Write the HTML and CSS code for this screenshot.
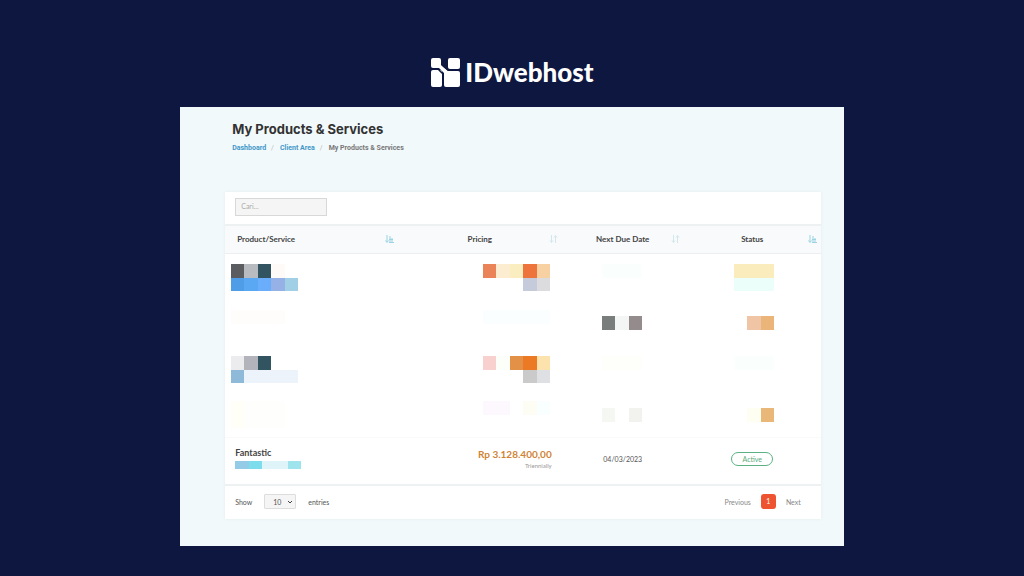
FILE: index.html
```html
<!DOCTYPE html>
<html lang="en">
<head>
<meta charset="utf-8">
<title>My Products &amp; Services</title>
<link rel="stylesheet" href="styles.css">
</head>
<body>
<header class="brand">
  <svg class="brand-mark" viewBox="0 0 30 29" aria-hidden="true">
    <g fill="#fff">
      <rect x="1" y="0" width="10" height="10" rx="2"/>
      <rect x="18" y="0" width="12" height="11" rx="2"/>
      <rect x="1" y="12" width="11" height="17" rx="2"/>
      <rect x="14" y="13" width="16" height="16" rx="2"/>
      <path d="M8 9l3-2 7 6-3 3z"/>
    </g>
    <path d="M0 11h8l5 5v13M12 7l6 5h12" fill="none" stroke="#0e1740" stroke-width="1.500"/>
  </svg>
  <span>IDwebhost</span>
</header>
<main class="panel">
  <h1>My Products &amp; Services</h1>
  <nav class="crumbs" aria-label="Breadcrumb">
    <a href="#">Dashboard</a><span class="sep">/</span><a href="#">Client Area</a><span class="sep">/</span><span>My Products &amp; Services</span>
  </nav>
  <section class="card">
    <div class="toolbar"><input class="search" type="text" placeholder="Cari..." aria-label="Cari"></div>
    <table>
      <colgroup><col class="c1"><col class="c2"><col class="c3"><col class="c4"></colgroup>
      <thead>
        <tr>
          <th scope="col"><div class="head head-first"><span>Product/Service</span><svg class="sort on" viewBox="0 0 9 8"><path d="M2 0v7M0.500 5.500l1.500 2 1.500-2M5 1v7M7 3v5M4 7.500h5M4 4.500h4"/></svg></div></th>
          <th scope="col"><div class="head"><span>Pricing</span><svg class="sort" viewBox="0 0 9 8"><path d="M2.500 0v7M1 5.500l1.500 2 1.500-2M6.500 8v-7M5 2.500l1.500-2 1.500 2"/></svg></div></th>
          <th scope="col"><div class="head"><span>Next Due Date</span><svg class="sort" viewBox="0 0 9 8"><path d="M2.500 0v7M1 5.500l1.500 2 1.500-2M6.500 8v-7M5 2.500l1.500-2 1.500 2"/></svg></div></th>
          <th scope="col"><div class="head"><span>Status</span><svg class="sort on" viewBox="0 0 9 8"><path d="M2 0v7M0.500 5.500l1.500 2 1.500-2M5 1v7M7 3v5M4 7.500h5M4 4.500h4"/></svg></div></th>
        </tr>
      </thead>
      <tbody>
        <tr>
          <td class="product"><svg class="mosaic wide" viewBox="0 0 5 2"><path fill="#5b5c60" d="M0 0h1v1H0z"/><path fill="#b8bcc0" d="M1 0h1v1H1z"/><path fill="#315460" d="M2 0h1v1H2z"/><path fill="#fefaf7" d="M3 0h1v1H3z"/><path fill="#4f9de6" d="M0 1h1v1H0z"/><path fill="#5aa7f3" d="M1 1h1v1H1z"/><path fill="#6aaefb" d="M2 1h1v1H2z"/><path fill="#96b1e6" d="M3 1h1v1H3z"/><path fill="#a0cfe6" d="M4 1h1v1H4z"/></svg></td>
          <td class="price"><svg class="mosaic wide" viewBox="0 0 5 2"><path fill="#ea8358" d="M0 0h1v1H0z"/><path fill="#fcecd0" d="M1 0h1v1H1z"/><path fill="#faedc0" d="M2 0h1v1H2z"/><path fill="#ee743e" d="M3 0h1v1H3z"/><path fill="#f8d1a2" d="M4 0h1v1H4z"/><path fill="#c5cbda" d="M3 1h1v1H3z"/><path fill="#dcdbdd" d="M4 1h1v1H4z"/></svg></td>
          <td class="due"><svg class="mosaic mid" viewBox="0 0 3 2"><path fill="#fafefd" d="M0 0h3v1H0z"/></svg></td>
          <td class="status"><svg class="mosaic mid" viewBox="0 0 3 2"><path fill="#faecbc" d="M0 0h3v1H0z"/><path fill="#ecfefa" d="M0 1h3v1H0z"/></svg></td>
        </tr>
        <tr>
          <td class="product"><svg class="mosaic wide" viewBox="0 0 5 2"><path fill="#fefdfb" d="M0 0h4v1H0z"/></svg></td>
          <td class="price"><svg class="mosaic wide" viewBox="0 0 5 2"><path fill="#fbfefe" d="M0 0h5v1H0z"/></svg></td>
          <td class="due"><svg class="mosaic short" viewBox="0 0 3 1"><path fill="#797e7c" d="M0 0h1v1H0z"/><path fill="#f3f6f4" d="M1 0h1v1H1z"/><path fill="#938b8c" d="M2 0h1v1H2z"/></svg></td>
          <td class="status"><svg class="mosaic short" viewBox="0 0 3 1"><path fill="#f0c5a5" d="M1 0h1v1H1z"/><path fill="#ebb579" d="M2 0h1v1H2z"/></svg></td>
        </tr>
        <tr>
          <td class="product"><svg class="mosaic wide" viewBox="0 0 5 2"><path fill="#ececee" d="M0 0h1v1H0z"/><path fill="#b2b3bb" d="M1 0h1v1H1z"/><path fill="#315460" d="M2 0h1v1H2z"/><path fill="#8eb9d8" d="M0 1h1v1H0z"/><path fill="#ecf3fa" d="M1 1h4v1H1z"/></svg></td>
          <td class="price"><svg class="mosaic wide" viewBox="0 0 5 2"><path fill="#f8d1ce" d="M0 0h1v1H0z"/><path fill="#fcfefa" d="M1 0h1v1H1z"/><path fill="#e49148" d="M2 0h1v1H2z"/><path fill="#ec7a24" d="M3 0h1v1H3z"/><path fill="#fce3ae" d="M4 0h1v1H4z"/><path fill="#cacacb" d="M3 1h1v1H3z"/><path fill="#dfe0e3" d="M4 1h1v1H4z"/></svg></td>
          <td class="due"><svg class="mosaic mid" viewBox="0 0 3 2"><path fill="#fefefa" d="M0 0h3v1H0z"/></svg></td>
          <td class="status"><svg class="mosaic mid" viewBox="0 0 3 2"><path fill="#fafefd" d="M0 0h3v1H0z"/></svg></td>
        </tr>
        <tr>
          <td class="product"><svg class="mosaic wide" viewBox="0 0 5 2"><path fill="#fffef7" d="M0 0h1v2H0z"/><path fill="#fefefc" d="M1 0h3v2H1z"/></svg></td>
          <td class="price"><svg class="mosaic wide" viewBox="0 0 5 2"><path fill="#fdf8fd" d="M0 0h2v1H0z"/><path fill="#fefdf3" d="M3 0h1v1H3z"/><path fill="#f9fefe" d="M4 0h1v1H4z"/></svg></td>
          <td class="due"><svg class="mosaic short" viewBox="0 0 3 1"><path fill="#f5f7f3" d="M0 0h1v1H0z"/><path fill="#f2f3ef" d="M2 0h1v1H2z"/></svg></td>
          <td class="status"><svg class="mosaic short" viewBox="0 0 3 1"><path fill="#fffef3" d="M1 0h1v1H1z"/><path fill="#e9b878" d="M2 0h1v1H2z"/></svg></td>
        </tr>
        <tr class="plan">
          <td class="product"><strong>Fantastic</strong><svg class="mosaic strip" viewBox="0 0 66 8"><path fill="#94cbe6" d="M0 0h14v8H0z"/><path fill="#7eddec" d="M14 0h13v8H14z"/><path fill="#def4f8" d="M27 0h26v8H27z"/><path fill="#9ee4ec" d="M53 0h13v8H53z"/></svg></td>
          <td class="price"><strong>Rp 3.128.400,00</strong><small>Triennially</small></td>
          <td class="due">04/03/2023</td>
          <td class="status"><span class="pill">Active</span></td>
        </tr>
      </tbody>
    </table>
    <footer class="foot">
      <label class="length"><span>Show</span>
        <span class="select"><select><option>10</option><option>25</option><option>50</option></select><svg class="chevron" viewBox="0 0 6 4" aria-hidden="true"><path d="M1 1l2 2 2-2"/></svg></span>
        <span>entries</span></label>
      <nav class="pager" aria-label="Pages"><a href="#">Previous</a><a class="current" href="#" aria-current="page">1</a><a href="#">Next</a></nav>
    </footer>
  </section>
</main>
</body>
</html>
```
FILE: styles.css
```css
* { box-sizing: border-box; }
body {
  margin: 0;
  min-height: 100vh;
  padding: 57px 0 30px;
  display: flex;
  flex-direction: column;
  align-items: center;
  background: #0e1740;
  color: #555;
  font: 7px/10px Lato, sans-serif;
}
a { color: inherit; text-decoration: none; }
.brand {
  display: flex;
  align-items: center;
  gap: 5px;
  margin-bottom: 20px;
  color: #fff;
  font-size: 26px;
  font-weight: 900;
  line-height: 30px;
}
.brand-mark { width: 30px; height: 29px; }
.panel {
  width: 64.8%;
  flex: 1;
  padding: 13px 23px 25px 45px;
  background: #f2f9fb;
}
h1 {
  margin: 0 7px;
  color: #333;
  font: 700 13px/18px Inter, sans-serif;
}
.crumbs {
  display: flex;
  gap: 5px;
  margin: 5px 7px 39px;
  color: #777;
  font: 700 7px/10px Roboto, sans-serif;
}
.crumbs a { color: #3f97c8; }
.sep { padding: 0 1px 0 0; color: #bbb; font-weight: 400; }
.card { background: #fff; box-shadow: 0 0 3px #e4ecef; }
.toolbar { padding: 6px 10px 8px; }
.search {
  display: block;
  width: 92px;
  height: 18px;
  padding: 0 5px 2px;
  border: 1px solid #d8d8d8;
  border-radius: 0;
  background: #f5f5f5;
  color: #555;
  font: 7px/10px Lato, sans-serif;
}
.search::placeholder { color: #aaa; }
table { width: 100%; border-collapse: collapse; table-layout: fixed; }
.c1 { width: 29%; }
.c2 { width: 27.5%; }
.c3 { width: 20.5%; }
.c4 { width: 23%; }
thead { background: #f8fafb; border-top: 2px solid #eef1f2; border-bottom: 1px solid #eceff0; }
th { padding: 0; height: 28px; color: #444; font-size: 8px; font-weight: 700; }
.head {
  display: grid;
  grid-template-columns: 1fr auto 1fr;
  align-items: center;
  padding: 0 4px;
}
.head::before { content: ""; }
.head-first { grid-template-columns: auto 1fr; padding: 0 4px 0 12px; }
.head-first::before { display: none; }
.sort {
  justify-self: end;
  width: 9px;
  height: 8px;
  fill: none;
  stroke: #d2e6ec;
}
.sort.on { stroke: #9ad3e1; }
td { height: 46px; padding: 2px 0 0; vertical-align: middle; text-align: center; }
td.product { padding-left: 6px; text-align: left; }
td.price { padding-right: 12px; text-align: right; }
td.due { padding-right: 2px; }
td.status { padding-left: 4px; }
.mosaic { display: inline-block; vertical-align: middle; shape-rendering: crispEdges; }
.wide { width: 67px; height: 27px; }
.mid { width: 40px; height: 27px; }
.short { width: 40px; height: 14px; }
.plan td { height: 47px; padding-top: 0; padding-bottom: 4px; border-top: 1px solid #fafafa; }
.plan td.product { padding-left: 10px; }
.plan td.price { padding-right: 10px; }
.plan td.due, .plan td.status { padding-left: 0; padding-right: 0; }
.plan strong { display: block; color: #444; font-size: 9px; line-height: 12px; }
.plan .price strong { color: #d08436; font-size: 10px; line-height: 14px; }
.plan .strip { display: block; width: 66px; height: 8px; margin: 2px 0; }
.plan small { display: block; color: #999; font-size: 6px; line-height: 10px; }
.pill {
  display: inline-block;
  width: 42px;
  border: 1px solid #5cb184;
  border-radius: 7px;
  color: #5cab7d;
  line-height: 12px;
}
.foot {
  display: flex;
  align-items: center;
  justify-content: space-between;
  padding: 8px 20px 10px 10px;
  border-top: 2px solid #eef1f2;
}
.length { display: flex; align-items: center; gap: 12px; }
.select { display: grid; align-items: center; }
.select > * { grid-area: 1 / 1; }
select {
  appearance: none;
  width: 32px;
  height: 15px;
  padding: 0 8px;
  border: 1px solid #ddd;
  border-radius: 1px;
  background: #f5f5f5;
  color: #555;
  font: 7px/10px Lato, sans-serif;
}
.chevron {
  justify-self: end;
  width: 6px;
  height: 4px;
  margin-right: 3px;
  fill: none;
  stroke: #444;
  pointer-events: none;
}
.pager { display: flex; align-items: center; gap: 10px; color: #888; }
.current {
  width: 15px;
  border-radius: 3px;
  background: #ee5430;
  color: #fff;
  line-height: 15px;
  text-align: center;
}
```
